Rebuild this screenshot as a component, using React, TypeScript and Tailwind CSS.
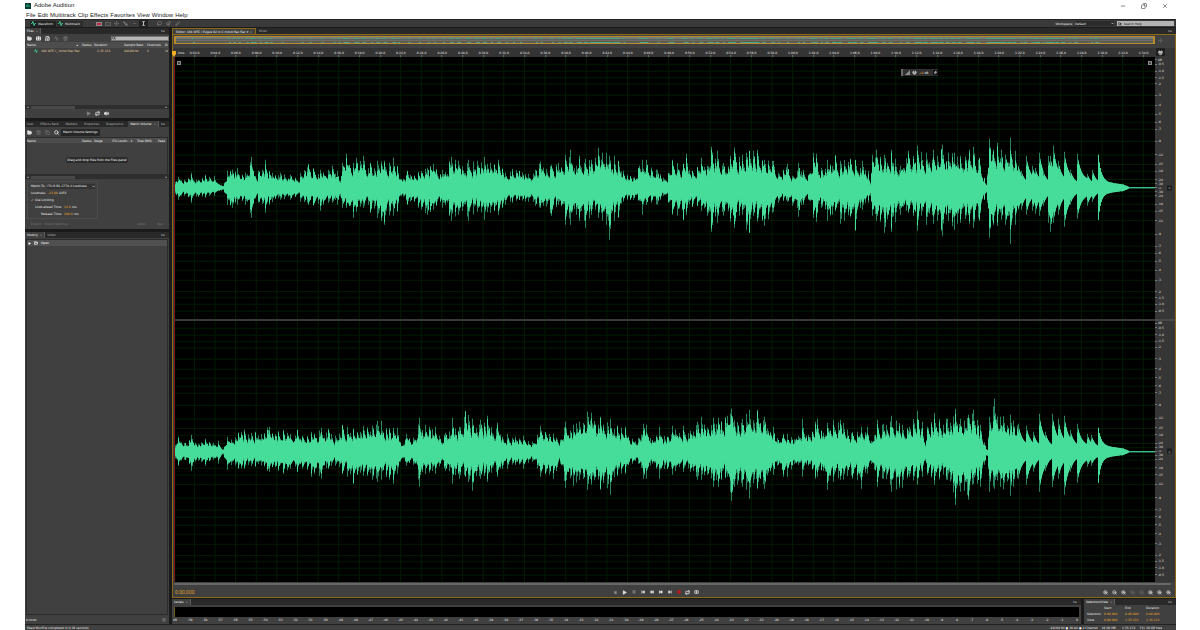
import { useMemo, type ReactNode } from "react";
import {
  Activity,
  ChevronDown,
  Copy,
  FileAudio,
  FolderOpen,
  Import,
  Lasso,
  Magnet,
  Minus,
  Move,
  Paintbrush,
  Pause,
  Pin,
  Play,
  Repeat,
  Rewind,
  FastForward,
  Search,
  SkipBack,
  SkipForward,
  Slice,
  Square,
  TextCursor,
  Trash2,
  Volume2,
  X,
  ZoomIn,
  ZoomOut,
} from "lucide-react";

type Hit = [x: number, up: number, down: number];

const ORIGIN = 173.7; // 0:00
const X0 = 175;
const WIDTH = 980;
const STEP = 20.63; // two seconds

const LEFT: Hit[] = [
  [174, 4, 4], [178, 11, 12], [184, 8, 8], [191, 15, 15], [198, 8, 9], [205, 13, 10], [214, 12, 8], [221, 3, 3], [223, 2, 2],
  [227, 17, 17], [232, 18, 20], [237, 20, 17], [245, 15, 17], [251, 31, 30], [253, 17, 16], [258, 17, 15], [265, 28, 25], [269, 17, 17],
  [280, 15, 12], [290, 13, 12], [300, 15, 14], [308, 24, 17], [320, 18, 23], [332, 22, 15], [337, 17, 17], [340, 7, 9],
  [342, 25, 20], [346, 34, 20], [353, 25, 30], [356, 30, 24], [363, 32, 20], [370, 25, 25], [377, 27, 30], [384, 27, 37],
  [393, 30, 28], [397, 22, 24], [400, 9, 8], [407, 17, 17], [418, 16, 20], [427, 20, 27], [433, 24, 22], [442, 18, 20],
  [451, 31, 33], [458, 27, 27], [468, 28, 33], [477, 27, 24], [484, 31, 32], [490, 25, 25], [498, 28, 27], [505, 15, 17],
  [512, 19, 15], [519, 17, 12], [525, 14, 14], [535, 18, 18], [540, 26, 20], [551, 23, 28], [558, 25, 17], [565, 33, 37],
  [570, 38, 37], [576, 22, 27], [579, 32, 33], [585, 29, 40], [591, 28, 27], [595, 30, 22], [598, 40, 30], [602, 35, 33],
  [606, 35, 37], [609, 32, 52], [614, 32, 33], [618, 27, 30], [623, 17, 14], [633, 10, 12], [639, 22, 13], [642, 28, 27],
  [646, 28, 17], [657, 18, 17], [663, 10, 8], [668, 15, 15], [672, 28, 27], [683, 24, 32], [686, 34, 27], [692, 17, 19],
  [701, 30, 23], [707, 22, 28], [711, 41, 44], [717, 37, 35], [723, 25, 28], [730, 32, 34], [734, 40, 40], [742, 33, 27],
  [746, 35, 42], [749, 37, 45], [753, 37, 28], [757, 38, 34], [764, 28, 38], [773, 27, 24], [778, 15, 15], [787, 24, 14],
  [792, 12, 18], [798, 25, 29], [803, 18, 17], [808, 13, 12], [813, 35, 30], [816, 34, 34], [821, 20, 20], [827, 28, 33],
  [832, 22, 27], [835, 33, 23], [840, 27, 36], [850, 29, 29], [855, 28, 43], [862, 27, 22], [868, 17, 15], [870, 5, 8],
  [872, 33, 28], [876, 38, 33], [884, 33, 45], [891, 38, 44], [900, 22, 27], [908, 37, 25], [917, 42, 43], [921, 36, 28],
  [926, 35, 37], [933, 38, 36], [937, 32, 33], [942, 43, 48], [948, 35, 33], [954, 35, 42], [960, 32, 35], [969, 38, 36],
  [973, 41, 40], [979, 30, 33], [986, 3, 5], [989, 49, 50], [993, 38, 37], [997, 45, 38], [1001, 38, 32], [1005, 33, 37],
  [1010, 50, 56], [1015, 37, 37], [1021, 17, 22], [1026, 32, 27], [1032, 22, 23], [1035, 20, 26], [1039, 35, 28],
  [1043, 17, 18], [1048, 32, 35], [1050, 32, 44], [1053, 42, 35], [1058, 27, 27], [1064, 36, 39], [1070, 18, 17],
  [1077, 34, 31], [1087, 14, 18], [1092, 18, 14], [1098, 33, 32],
];

const RIGHT: Hit[] = [
  [174, 4, 4], [178, 15, 14], [184, 9, 8], [191, 17, 19], [198, 8, 9], [205, 13, 14], [213, 9, 8], [218, 11, 12], [223, 3, 3],
  [227, 15, 18], [238, 19, 17], [244, 22, 17], [255, 20, 15], [269, 25, 20], [283, 22, 22], [297, 22, 20], [311, 20, 25],
  [321, 24, 27], [328, 23, 17], [335, 16, 14], [342, 27, 22], [347, 25, 25], [353, 23, 32], [363, 26, 24], [372, 26, 28],
  [377, 31, 30], [381, 31, 28], [393, 24, 32], [397, 24, 22], [401, 6, 7], [406, 18, 14], [413, 14, 13], [419, 34, 35],
  [425, 27, 22], [435, 25, 22], [445, 19, 19], [452, 34, 32], [459, 25, 27], [465, 41, 25], [472, 33, 39], [480, 32, 27],
  [487, 36, 30], [497, 29, 25], [502, 15, 17], [507, 18, 17], [515, 15, 13], [523, 16, 17], [532, 10, 10], [540, 26, 25],
  [553, 18, 27], [560, 12, 12], [565, 30, 36], [573, 27, 34], [579, 30, 28], [587, 40, 38], [591, 39, 33], [600, 35, 38],
  [610, 33, 43], [617, 26, 24], [625, 25, 22], [632, 13, 12], [638, 14, 12], [643, 28, 27], [646, 27, 27], [652, 12, 12],
  [659, 25, 27], [667, 15, 17], [672, 26, 23], [683, 26, 20], [690, 21, 20], [697, 30, 28], [701, 35, 28], [707, 24, 23],
  [713, 34, 35], [718, 34, 35], [727, 36, 25], [731, 43, 49], [742, 33, 35], [746, 38, 38], [749, 42, 47], [757, 42, 37],
  [764, 35, 37], [773, 25, 23], [777, 14, 14], [783, 18, 25], [787, 18, 25], [795, 12, 11], [802, 33, 25], [808, 17, 14],
  [815, 30, 27], [817, 33, 25], [823, 19, 19], [827, 29, 38], [833, 32, 30], [840, 32, 28], [852, 20, 27], [861, 25, 37],
  [867, 25, 22], [871, 11, 12], [877, 32, 35], [883, 28, 27], [891, 36, 40], [902, 27, 36], [909, 25, 25], [917, 41, 33],
  [922, 30, 25], [925, 7, 9], [927, 25, 23], [934, 39, 33], [947, 33, 28], [955, 43, 53], [960, 33, 40], [968, 37, 48],
  [973, 42, 32], [980, 27, 35], [987, 2, 4], [989, 35, 40], [994, 53, 37], [1000, 35, 35], [1010, 37, 44], [1018, 28, 27],
  [1026, 26, 33], [1033, 20, 20], [1039, 38, 40], [1045, 20, 19], [1052, 38, 35], [1058, 33, 27], [1064, 36, 43],
  [1070, 22, 20], [1077, 28, 31], [1087, 18, 15], [1091, 17, 14], [1098, 24, 31],
];

// One value per pixel column: each hit jumps up at once and then rings out.
function buildWave(hits: Hit[], seed: number) {
  let s = seed;
  const rand = () => {
    s = (s * 16807) % 2147483647;
    return s / 2147483647;
  };
  const cols: { x: number; up: number; down: number; solidUp: number; solidDown: number }[] = [];
  let i = 0;
  let since = 0;
  let period = 4;
  let accent = 1;
  for (let x = X0; x < 1098; x++) {
    while (i < hits.length - 1 && hits[i + 1][0] <= x) {
      i++;
      since = 0;
      accent = 1;
      period = 3 + Math.floor(rand() * 3);
    }
    const a = hits[i];
    const b = hits[Math.min(i + 1, hits.length - 1)];
    const late = x >= 1018;
    const t = (x - a[0]) / Math.max(1, b[0] - a[0]);
    if (late) {
      // separate notes at the end: a clean attack and a smooth tail
      const h = 0.22 + 0.78 * Math.exp(-since / 4);
      const up = Math.max(6, a[1] * h);
      const down = Math.max(6, a[2] * h);
      const solid = since === 0 ? 0.7 : 0.94;
      cols.push({ x, up, down, solidUp: up * solid, solidDown: down * solid });
      since++;
      continue;
    }
    const up = a[1] + (b[1] - a[1]) * t;
    const down = a[2] + (b[2] - a[2]) * t;
    if (since >= period) {
      since = 0;
      accent = 0.7 + rand() * 0.3;
      period = 3 + Math.floor(rand() * 3);
    }
    const floor = 0.36;
    const ring = floor + (accent - floor) * Math.exp(-since / 2.3);
    const jitter = since === 0 ? 1 : 0.88 + rand() * 0.26;
    const h = ring * jitter;
    const solid = since === 0 ? 0.6 + rand() * 0.4 : 0.8 + rand() * 0.2;
    cols.push({ x, up: up * h, down: down * h, solidUp: up * h * solid, solidDown: down * h * solid });
    since++;
  }
  for (let x = 1098; x < X0 + WIDTH; x++) {
    const d = x - 1098;
    const [, up, down] = hits[hits.length - 1];
    let u = 0.5;
    let l = 0.5;
    if (x < 1122) {
      const tail = 6.5 * (1 - d / 50);
      u = tail + (up - 6.5) * Math.exp(-d / 3);
      l = tail + (down - 6.5) * Math.exp(-d / 2.6);
    } else if (x < 1129) {
      u = l = 0.5 + (1129 - x) * 0.45;
    }
    cols.push({ x, up: u, down: l, solidUp: u, solidDown: l });
  }
  const outline = (u: "up" | "solidUp", l: "down" | "solidDown") => {
    const top = cols.map((c) => `V${(-c[u]).toFixed(1)}H${c.x + 1}`).join("");
    const bottom = [...cols].reverse().map((c) => `V${c[l].toFixed(1)}H${c.x}`).join("");
    return `M${X0} 0${top}${bottom}Z`;
  };
  return { outer: outline("up", "down"), inner: outline("solidUp", "solidDown") };
}

const DB = [0.5, 1, 1.5, 2, 3, 4, 5, 6, 7, 9, 12, 15, 18, 24, 30];
const dbLabel = (d: number) => (d < 2 ? `-${d.toFixed(1).replace(".", ",")}` : `-${d}`);
const SCALE = [
  { at: 1, label: "dB" },
  ...DB.map((d) => ({ at: 50 - 50 * 10 ** (-d / 20), label: dbLabel(d) })),
  { at: 50, label: "-∞" },
  ...DB.map((d) => ({ at: 50 + 50 * 10 ** (-d / 20), label: dbLabel(d) })),
];

const TIMES = Array.from({ length: 47 }, (_, k) => {
  const sec = (k + 1) * 2;
  return `${Math.floor(sec / 60)}:${String(sec % 60).padStart(2, "0")},0`;
});

const ICON = "size-[5px] shrink-0";

function IconButton({ label, children, className = "" }: { label: string; children: ReactNode; className?: string }) {
  return (
    <button type="button" aria-label={label} className={`flex h-2 w-[9px] items-center justify-center text-[#dedede] ${className}`}>
      {children}
    </button>
  );
}

function Tab({ children, active = false }: { children: ReactNode; active?: boolean }) {
  return (
    <button
      type="button"
      className={
        active
          ? "flex h-full items-center gap-[2px] border-r border-[#5a5a5a] bg-[#404040] px-[2px] text-white"
          : "flex h-full items-center px-[2px] text-[#b4b4b4]"
      }
    >
      {children}
      {active && <span className="text-[#8a8a8a]">×</span>}
    </button>
  );
}

function TabStrip({ children }: { children: ReactNode }) {
  return (
    <div className="flex h-[6px] shrink-0 items-center bg-[#292929]">
      {children}
      <button type="button" aria-label="Panel menu" className="ml-auto pr-1 text-[#c0c0c0]">▾≡</button>
    </div>
  );
}

function HScroll({ thumb }: { thumb: string }) {
  return (
    <div className="flex h-1 shrink-0 items-center gap-[2px] bg-[#2e2e2e] px-[2px] text-[#d0d0d0]">
      <span>◂</span>
      <div className="h-[3px] flex-1">
        <div className={`h-full bg-[#484848] ${thumb}`} />
      </div>
      <span>▸</span>
    </div>
  );
}

function Channel({ hits, seed }: { hits: Hit[]; seed: number }) {
  const wave = useMemo(() => buildWave(hits, seed), [hits, seed]);
  return (
    <svg viewBox={`${X0} -131 ${WIDTH} 262`} preserveAspectRatio="none" className="min-h-0 w-full flex-1 basis-0">
      <g stroke="#001c02" strokeWidth="1">
        {TIMES.map((t, k) => (
          <line key={t} x1={ORIGIN + (k + 1) * STEP} x2={ORIGIN + (k + 1) * STEP} y1="-131" y2="131" />
        ))}
        {DB.map((d) => {
          const y = 131 * 10 ** (-d / 20);
          return <path key={d} d={`M${X0} ${-y}H${X0 + WIDTH}M${X0} ${y}H${X0 + WIDTH}`} />;
        })}
      </g>
      <path d={wave.outer} fill="#2a8560" />
      <path d={wave.inner} fill="#46dc99" />
    </svg>
  );
}

function ChannelScale() {
  return (
    <div className="relative flex-1">
      {SCALE.map((m, i) => (
        <span key={i} className="absolute left-0 flex -translate-y-1/2 items-center gap-px" style={{ top: `${m.at}%` }}>
          <i className="h-px w-[2px] bg-[#777777]" />
          {m.label}
        </span>
      ))}
      <button
        type="button"
        aria-label="Toggle channel"
        className="absolute top-1/2 left-[12px] flex size-[5px] -translate-y-1/2 items-center justify-center bg-[#1d1d1d] text-[#c0c0c0]"
      >
        ×
      </button>
    </div>
  );
}

function Overview() {
  // sparse marks where the file is quiet, denser ones where it is loud
  const dots = useMemo(() => {
    let d = "";
    LEFT.forEach(([x, up]) => {
      if (up > 14) d += `M${x} 1h2v1h-2zM${x + 1} 5h2v1h-2z`;
      if (up > 26) d += `M${x - 2} 1h4v1h-4zM${x - 1} 5h3v1h-3z`;
    });
    return d;
  }, []);
  return (
    <div className="flex h-2 flex-1 border-x-2 border-y border-[#b98a2a] bg-[#59605c]">
      <svg viewBox={`${X0} 0 ${WIDTH} 6`} preserveAspectRatio="none" className="h-full w-full">
        <rect x={X0} y="0" width={WIDTH} height="2" fill="#747a74" />
        <rect x={X0} y="3" width={WIDTH} height="1" fill="#75695c" />
        <path d={dots} fill="#4ba58a" />
      </svg>
    </div>
  );
}

function FilesPanel() {
  return (
    <section className="flex h-[90px] flex-col bg-[#404040]">
      <TabStrip>
        <Tab active>Files</Tab>
      </TabStrip>
      <div className="flex h-2 shrink-0 items-center">
        <IconButton label="Open file"><FolderOpen className={ICON} strokeWidth={3} fill="currentColor" /></IconButton>
        <IconButton label="Import file"><Import className={ICON} strokeWidth={5} /></IconButton>
        <IconButton label="New file"><FileAudio className={ICON} strokeWidth={4} /></IconButton>
        <IconButton label="Insert into multitrack" className="opacity-35"><Activity className={ICON} strokeWidth={3} /></IconButton>
        <IconButton label="Close file" className="opacity-35"><Trash2 className={ICON} strokeWidth={3} /></IconButton>
        <label className="ml-auto flex h-[5px] w-[58px] items-center border border-[#777777] bg-[#b5b5b5] text-[#333333]">
          <Search className="size-1" strokeWidth={4} />
          <input aria-label="Search files" className="w-full bg-transparent outline-none" />
        </label>
      </div>
      <div className="mx-px flex-1 overflow-hidden bg-[#404040]">
        <table className="w-full table-fixed text-left whitespace-nowrap">
          <colgroup>
            <col className="w-[56px]" />
            <col className="w-[12px]" />
            <col className="w-[30px]" />
            <col className="w-[23px]" />
            <col className="w-[18px]" />
            <col />
          </colgroup>
          <thead>
            <tr className="h-[6px] bg-[#4d4d4d] text-[#f0f0f0]">
              <th className="pl-px font-normal"><span className="flex justify-between pr-1">Name <span>▴</span></span></th>
              <th className="font-normal">Status</th>
              <th className="font-normal">Duration</th>
              <th className="font-normal">Sample Rate</th>
              <th className="font-normal">Channels</th>
              <th className="overflow-hidden font-normal">Bi</th>
            </tr>
          </thead>
          <tbody>
            <tr className="h-[6px] text-[#f0dca8]">
              <td>
                <span className="flex items-center gap-[3px] pl-2">
                  <Activity className="size-1 text-[#3fd08f]" strokeWidth={5} />
                  104 WTC I_ minor.flac.flac
                </span>
              </td>
              <td />
              <td className="pl-[3px]">1:35,133</td>
              <td>44100 Hz</td>
              <td>2</td>
              <td className="overflow-hidden">16</td>
            </tr>
          </tbody>
        </table>
      </div>
      <HScroll thumb="w-1/3" />
      <div className="flex h-[9px] shrink-0 items-center justify-center">
        <IconButton label="Play" className="opacity-40"><Play className={ICON} fill="currentColor" /></IconButton>
        <IconButton label="Loop"><Repeat className={ICON} strokeWidth={4} /></IconButton>
        <IconButton label="Auto-play"><Volume2 className={ICON} strokeWidth={4} fill="currentColor" /></IconButton>
      </div>
    </section>
  );
}

type HotValueProps = { id: string; label: string; value: string; unit: string; labelWidth: string; valueWidth: string };

function HotValue({ id, label, value, unit, labelWidth, valueWidth }: HotValueProps) {
  return (
    <div className="flex h-[6px] items-center gap-[2px]">
      <label htmlFor={id} className={`text-right ${labelWidth}`}>{label}</label>
      <span className="flex">
        <input id={id} defaultValue={value} className={`bg-transparent text-[#f0ac28] outline-none ${valueWidth}`} />
        {unit}
      </span>
    </div>
  );
}

function MatchVolumePanel() {
  return (
    <section className="flex h-[108px] flex-col overflow-hidden bg-[#404040]">
      <TabStrip>
        <div className="flex h-full flex-1 items-center justify-between">
          <Tab>nsor</Tab>
          <Tab>Effects Rack</Tab>
          <Tab>Markers</Tab>
          <Tab>Properties</Tab>
          <Tab>Diagnostics</Tab>
          <Tab active>Match Volume</Tab>
        </div>
        <span className="w-[2px]" />
      </TabStrip>
      <div className="flex h-[10px] shrink-0 items-center">
        <IconButton label="Open file"><FolderOpen className={ICON} strokeWidth={3} fill="currentColor" /></IconButton>
        <IconButton label="Remove" className="opacity-30"><Trash2 className={ICON} strokeWidth={3} /></IconButton>
        <IconButton label="Copy" className="opacity-30"><Copy className={ICON} strokeWidth={3} /></IconButton>
        <IconButton label="Scan"><Search className={ICON} strokeWidth={4} /></IconButton>
        <button type="button" className="h-[7px] bg-[#262626] px-[2px] text-white">Match Volume Settings</button>
      </div>
      <div className="mx-px h-[38px] shrink-0 border border-[#2b2b2b]">
        <table className="w-full table-fixed text-left whitespace-nowrap">
          <colgroup>
            <col className="w-[55px]" />
            <col className="w-[12px]" />
            <col className="w-[18px]" />
            <col className="w-[25px]" />
            <col className="w-[21px]" />
            <col />
          </colgroup>
          <thead>
            <tr className="h-[5px] bg-[#4d4d4d] text-[#f0f0f0]">
              <th className="font-normal">Name</th>
              <th className="font-normal">Status</th>
              <th className="font-normal">Stage</th>
              <th className="font-normal">ITU Loudn... ▾</th>
              <th className="font-normal">Total RMS</th>
              <th className="font-normal">Peak</th>
            </tr>
          </thead>
        </table>
        <p className="mt-[15px] text-center text-white">
          <span className="rounded-[2px] bg-[#2b2b2b] p-px">Drag and drop files from the Files panel</span>
        </p>
      </div>
      <HScroll thumb="w-1/3" />
      <div className="mx-[2px] mt-[2px] w-[71px] shrink-0 border border-[#4b4b4b] py-px pl-[3px] text-[#f0f0f0]">
        <div className="flex h-[6px] items-center gap-[2px]">
          <label htmlFor="match-to">Match To:</label>
          <div className="flex h-[5px] w-[48px] items-center justify-between bg-[#323232]">
            <select id="match-to" className="h-[5px] w-[44px] appearance-none bg-transparent">
              <option>ITU-R BS.1770-2 Loudness</option>
            </select>
            <ChevronDown className="size-[3px] shrink-0" strokeWidth={5} />
          </div>
        </div>
        <div className="mt-px flex flex-col gap-px">
          <HotValue id="loudness" label="Loudness:" value="-23,00" unit="LUFS" labelWidth="w-[15px]" valueWidth="w-[11px]" />
          <label className="flex h-[6px] items-center gap-px">
            <input type="checkbox" defaultChecked className="sr-only" />
            <span className="w-[3px]">✓</span>
            Use Limiting
          </label>
          <HotValue id="look-ahead" label="Look-ahead Time:" value="12,0" unit="ms" labelWidth="w-[31px]" valueWidth="w-2" />
          <HotValue id="release" label="Release Time:" value="200,0" unit="ms" labelWidth="w-[31px]" valueWidth="w-[10px]" />
        </div>
      </div>
      <div className="flex h-[10px] shrink-0 items-center gap-1 px-[6px] text-[#7a7a7a]">
        <button type="button">Export</button>
        <button type="button">Export Settings...</button>
        <button type="button" className="ml-auto">Undo</button>
        <button type="button" className="ml-2">Run</button>
      </div>
    </section>
  );
}

function HistoryPanel() {
  return (
    <section className="flex min-h-0 flex-1 flex-col bg-[#404040]">
      <TabStrip>
        <Tab active>History</Tab>
        <Tab>Video</Tab>
      </TabStrip>
      <div className="mx-px mt-px flex-1 border border-[#2b2b2b]">
        <div className="flex h-[6px] items-center gap-[3px] bg-[#505050] px-px text-white">
          <Play className="size-[3px]" fill="currentColor" />
          <FolderOpen className="size-1" strokeWidth={4} />
          Open
        </div>
      </div>
      <div className="flex h-[9px] shrink-0 items-center justify-between px-px text-[#eeeeee]">
        0 Undo
        <IconButton label="Delete history" className="opacity-40"><Trash2 className="size-1" strokeWidth={3} /></IconButton>
      </div>
    </section>
  );
}

function Hud() {
  return (
    <div className="absolute top-[12px] right-[217px] flex h-[7px] w-[37px] items-center gap-[2px] border-l-2 border-[#6a6a6a] bg-[#303030] pl-[2px] text-white">
      <svg viewBox="0 0 8 8" className="size-[5px]"><path d="M0 8L8 0V8z" fill="#8a8a8a" /></svg>
      <svg viewBox="0 0 8 8" className="size-[5px]"><circle cx="4" cy="4" r="3.4" fill="#b5b5b5" /><path d="M4 4V0" stroke="#222222" /></svg>
      <span><span className="text-[#f0ac28]">+0</span> dB</span>
      <button type="button" aria-label="Pin HUD" className="ml-auto bg-[#181818] p-px"><Pin className="size-[3px] rotate-45" strokeWidth={5} /></button>
    </div>
  );
}

function Editor() {
  return (
    <section className="flex min-h-0 flex-1 flex-col bg-[#404040]">
      <div className="flex h-[6px] shrink-0 items-center bg-[#292929]">
        <button type="button" className="flex h-full w-[84px] items-center justify-between border-x border-t border-[#8c6918] bg-[#404040] px-[3px] whitespace-nowrap text-white">
          Editor: 104 WTC I Fugue 02 in C minor.flac.flac <span>▾</span> <span className="text-[#999999]">×</span>
        </button>
        <button type="button" className="ml-[3px] text-[#b4b4b4]">Mixer</button>
        <button type="button" aria-label="Panel menu" className="ml-auto pr-1 text-[#c0c0c0]">▾≡</button>
      </div>
      <div className="flex min-h-0 flex-1 flex-col border border-[#8c6918] pl-px">
        <div className="flex h-[13px] shrink-0 items-start pt-px">
          <Overview />
          <div className="flex w-[20px] pl-px"><IconButton label="Zoom out full" className="opacity-30"><Move className={ICON} /></IconButton></div>
        </div>
        <div className="flex min-h-0 flex-1">
          <div className="flex min-w-0 flex-1 flex-col">
            <div className="relative h-[9px] shrink-0 bg-[#343434] text-[#eeeeee]">
              <span className="absolute top-[3px] left-1">hms</span>
              <svg viewBox="0 0 4 6" className="absolute top-[3px] left-[-2px] h-[6px] w-1"><path d="M0 0h4v3L2 6 0 3z" fill="#f0b020" /></svg>
              {TIMES.map((t, k) => (
                <span
                  key={t}
                  className="absolute top-[3px] flex -translate-x-1/2 flex-col items-center"
                  style={{ left: `${(((k + 1) * STEP) / (WIDTH + 1)) * 100}%` }}
                >
                  {t}
                  <i className="h-[2px] w-px bg-[#777777]" />
                </span>
              ))}
            </div>
            <div className="relative flex min-h-0 flex-1 flex-col border-l border-[#7a1515] bg-black">
              <Channel hits={LEFT} seed={4211} />
              <div className="h-[2px] shrink-0 bg-[#3a3a3a]" />
              <Channel hits={RIGHT} seed={9157} />
              <span className="absolute top-1 left-[2px] size-1 border border-[#8a8a8a] bg-[#444444]" />
              <span className="absolute top-1 right-[3px] size-1 border border-[#8a8a8a] bg-[#444444]" />
              <Hud />
            </div>
          </div>
          <div className="flex w-[20px] shrink-0 flex-col bg-[#363636] text-[#e4e4e4]">
            <div className="flex h-[9px] pl-px">
              <IconButton label="Snap" className="bg-[#1f1f1f]"><Magnet className={`${ICON} rotate-[135deg]`} strokeWidth={4} /></IconButton>
            </div>
            <ChannelScale />
            <div className="h-[2px] shrink-0 bg-[#4a4a4a]" />
            <ChannelScale />
          </div>
        </div>
        <div className="h-[5px] shrink-0 bg-[#404040] pt-px pb-[2px]"><div className="mr-1 h-[2px] rounded-full bg-[#686868]" /></div>
        <div className="flex h-[10px] shrink-0 items-center">
          <div className="flex-1 basis-0 pl-px font-['Liberation_Sans',sans-serif] text-[5px] leading-[6px] text-[#e0a025]">0:00,000</div>
          <div className="flex pr-9">
            <IconButton label="Stop" className="opacity-50"><Square className="size-[3px]" fill="currentColor" /></IconButton>
            <IconButton label="Play"><Play className={ICON} fill="currentColor" /></IconButton>
            <IconButton label="Pause" className="opacity-40"><Pause className="size-1" fill="currentColor" /></IconButton>
            <IconButton label="Go to start"><SkipBack className="size-1" strokeWidth={3} fill="currentColor" /></IconButton>
            <IconButton label="Rewind"><Rewind className="size-1" strokeWidth={3} fill="currentColor" /></IconButton>
            <IconButton label="Fast forward"><FastForward className="size-1" strokeWidth={3} fill="currentColor" /></IconButton>
            <IconButton label="Go to end"><SkipForward className="size-1" strokeWidth={3} fill="currentColor" /></IconButton>
            <IconButton label="Record"><span className="size-1 rounded-full bg-[#b01c1c]" /></IconButton>
            <IconButton label="Loop playback"><Repeat className={ICON} strokeWidth={4} /></IconButton>
            <IconButton label="Skip selection">
              <svg viewBox="0 0 12 10" className="h-1 w-[5px]" fill="none" stroke="currentColor" strokeWidth="2">
                <rect x="1" y="1" width="10" height="8" rx="3" />
                <path d="M5 3l3 2-3 2z" fill="currentColor" />
              </svg>
            </IconButton>
          </div>
          <div className="flex flex-1 basis-0 justify-end pr-[2px]">
            <IconButton label="Zoom in amplitude"><ZoomIn className={ICON} strokeWidth={3} /></IconButton>
            <IconButton label="Zoom out amplitude"><ZoomOut className={ICON} strokeWidth={3} /></IconButton>
            <IconButton label="Zoom in time"><ZoomIn className={ICON} strokeWidth={3} /></IconButton>
            <IconButton label="Zoom out time" className="opacity-25"><ZoomOut className={ICON} strokeWidth={3} /></IconButton>
            <IconButton label="Zoom out full" className="opacity-25"><ZoomOut className={ICON} strokeWidth={3} /></IconButton>
            <IconButton label="Zoom to in point"><ZoomIn className={ICON} strokeWidth={3} /></IconButton>
            <IconButton label="Zoom to out point"><ZoomIn className={ICON} strokeWidth={3} /></IconButton>
            <IconButton label="Zoom to selection"><ZoomIn className={ICON} strokeWidth={3} /></IconButton>
          </div>
        </div>
      </div>
    </section>
  );
}

function Levels() {
  return (
    <section className="flex min-w-0 flex-1 flex-col bg-[#404040]">
      <TabStrip>
        <Tab active>Levels</Tab>
      </TabStrip>
      <div className="mx-[2px] mt-[2px] h-[10px] border-l border-[#6a5a1a] bg-black" />
      <div className="flex h-[6px] items-center justify-between pr-px text-[#eeeeee]">
        {Array.from({ length: 61 }, (_, k) => (
          <span key={k} className="flex w-[6px] shrink-0 justify-center">{k === 0 ? "dB" : k - 60}</span>
        ))}
      </div>
    </section>
  );
}

function SelectionView() {
  return (
    <section className="flex w-[92px] shrink-0 flex-col bg-[#404040]">
      <TabStrip>
        <Tab active>Selection/View</Tab>
      </TabStrip>
      <table className="ml-[3px] w-[80px] table-fixed text-left text-[#eeeeee]">
        <thead>
          <tr className="h-[6px]">
            <td className="w-[17px]" />
            <th className="font-normal">Start</th>
            <th className="font-normal">End</th>
            <th className="font-normal">Duration</th>
          </tr>
        </thead>
        <tbody className="text-[#f0ac28]">
          <tr className="h-[6px]">
            <th className="font-normal text-[#eeeeee]">Selection</th>
            <td>0:00,000</td>
            <td>0:00,000</td>
            <td>0:00,000</td>
          </tr>
          <tr className="h-[6px]">
            <th className="font-normal text-[#eeeeee]">View</th>
            <td>0:00,000</td>
            <td>1:35,133</td>
            <td>1:35,133</td>
          </tr>
        </tbody>
      </table>
    </section>
  );
}

function Toolbar() {
  return (
    <div className="flex h-2 shrink-0 items-center border-t border-[#242424] bg-[#3a3a3a] text-[#f0f0f0]">
      <button type="button" className="ml-[5px] flex h-[6px] w-[26px] items-center gap-[2px] bg-[#222222] px-px">
        <Activity className={`${ICON} text-[#46dc99]`} strokeWidth={4} />
        Waveform
      </button>
      <button type="button" className="ml-px flex h-[6px] w-[26px] items-center gap-[2px] bg-[#2c2c2c] px-px">
        <Activity className={`${ICON} text-[#46dc99]`} strokeWidth={4} />
        Multitrack
      </button>
      <div className="ml-[11px] flex items-center">
        <IconButton label="Spectral frequency display"><span className="h-1 w-[6px] border border-[#8a8a8a] bg-[#c02a3a]" /></IconButton>
        <IconButton label="Spectral pitch display" className="opacity-40"><span className="h-1 w-[6px] border border-[#8a8a8a] bg-[#555555]" /></IconButton>
        <IconButton label="Move tool" className="opacity-30"><Move className={ICON} strokeWidth={3} /></IconButton>
        <IconButton label="Razor tool" className="opacity-60"><Slice className={`${ICON} -scale-x-100`} strokeWidth={3} /></IconButton>
        <IconButton label="Slip tool" className="opacity-30"><Minus className={ICON} strokeWidth={3} /></IconButton>
        <IconButton label="Time selection tool" className="bg-[#222222]"><TextCursor className={ICON} strokeWidth={4} /></IconButton>
        <IconButton label="Lasso tool" className="ml-[7px] opacity-40"><Lasso className={ICON} strokeWidth={3} /></IconButton>
        <IconButton label="Paintbrush tool" className="opacity-40"><Paintbrush className={ICON} strokeWidth={3} /></IconButton>
        <IconButton label="Spot healing tool" className="opacity-40"><Slice className={ICON} strokeWidth={3} /></IconButton>
      </div>
      <label htmlFor="workspace" className="mr-[2px] ml-auto">Workspace:</label>
      <div className="flex h-[5px] w-[39px] items-center justify-between bg-[#2c2c2c]">
        <select id="workspace" className="h-[5px] w-[34px] appearance-none bg-transparent">
          <option>Default</option>
        </select>
        <ChevronDown className="size-[3px]" strokeWidth={5} />
      </div>
      <label className="mr-[2px] ml-[3px] flex h-[5px] w-[57px] items-center gap-[2px] bg-[#b4b4b4] pl-px text-[#111111]">
        <Search className="size-1" strokeWidth={4} />
        <input aria-label="Search Help" placeholder="Search Help" className="h-[5px] w-full bg-transparent placeholder-[#111111] outline-none" />
      </label>
    </div>
  );
}

export default function App() {
  return (
    <div className="h-screen bg-white">
      <div className="mr-6 ml-[25px] flex h-full flex-col font-['DejaVu_Sans',sans-serif] text-[3px] leading-[4px]">
        <header className="shrink-0 font-['Liberation_Sans',sans-serif] text-[6px] leading-[7px] text-[#1a1a1a]">
          <div className="flex h-[11px] items-center">
            <span className="flex size-[6px] items-center justify-center bg-[#0a3b30] text-[3px] leading-[4px] text-[#30d0a0]">Au</span>
            <h1 className="ml-[3px]">Adobe Audition</h1>
            <div className="ml-auto flex gap-[15px] pr-2">
              <button type="button" aria-label="Minimize"><Minus className="size-[6px]" /></button>
              <button type="button" aria-label="Restore"><Copy className="size-[6px] -scale-x-100" /></button>
              <button type="button" aria-label="Close"><X className="size-[6px]" /></button>
            </div>
          </div>
          <nav className="flex h-2 items-center gap-[2px] pl-px">
            {["File", "Edit", "Multitrack", "Clip", "Effects", "Favorites", "View", "Window", "Help"].map((m) => (
              <button key={m} type="button">{m}</button>
            ))}
          </nav>
        </header>
        <Toolbar />
        <main className="flex min-h-0 flex-1 gap-[3px] bg-[#1a1a1a] pt-px">
          <div className="flex w-[144px] shrink-0 flex-col gap-[3px]">
            <FilesPanel />
            <MatchVolumePanel />
            <HistoryPanel />
          </div>
          <div className="flex min-w-0 flex-1 flex-col gap-px">
            <Editor />
            <div className="flex h-[25px] shrink-0 gap-[3px]">
              <Levels />
              <SelectionView />
            </div>
          </div>
        </main>
        <footer className="flex h-[6px] shrink-0 items-center border-t border-[#222222] bg-[#404040] px-[2px] text-[#eeeeee]">
          <span>Read NicoFile completed in 0,36 seconds</span>
          <span className="ml-auto">44100 Hz ● 16-bit ● 2 Channel</span>
          <span className="ml-1">16,00 MB</span>
          <span className="ml-[6px]">1:35,133</span>
          <span className="mr-3 ml-1">711,36 GB free</span>
        </footer>
      </div>
    </div>
  );
}
